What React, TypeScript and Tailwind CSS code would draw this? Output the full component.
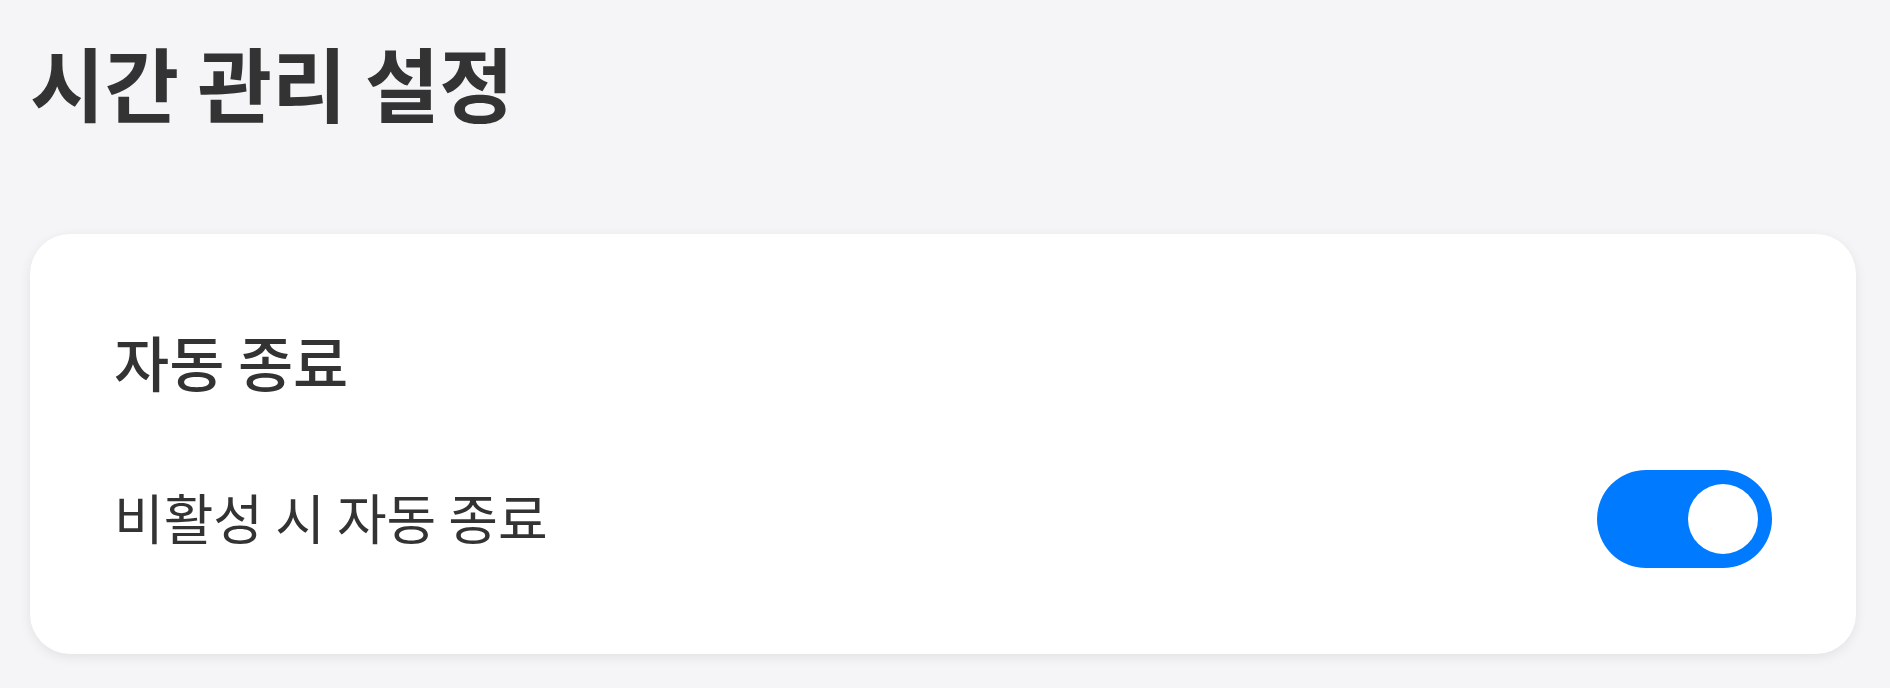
import React from "react";

export default function App() {
  return (
    <div
      className="min-h-[688px] w-full bg-[#f5f5f7] pl-[30px] pr-[34px] pt-[40px] text-[#333333]"
      style={{ fontFamily: '"Noto Sans CJK KR", "Noto Sans", sans-serif' }}
    >
      <h1 className="text-[81px] font-bold leading-none">시간 관리 설정</h1>
      <div className="mt-[113px] rounded-[40px] bg-white px-[84px] pt-[84px] pb-[86px] shadow-[0_3px_12px_rgba(0,0,0,0.08)]">
        <h2 className="text-[60px] font-medium leading-[86px]">자동 종료</h2>
        <div className="mt-[66px] flex items-center justify-between">
          <span className="mb-[4px] text-[54px] font-normal leading-none">비활성 시 자동 종료</span>
          <button
            type="button"
            className="flex h-[98px] w-[175px] items-center justify-end rounded-full bg-[#007aff] pr-[14px]"
          >
            <span className="block h-[70px] w-[70px] rounded-full bg-white" />
          </button>
        </div>
      </div>
    </div>
  );
}
